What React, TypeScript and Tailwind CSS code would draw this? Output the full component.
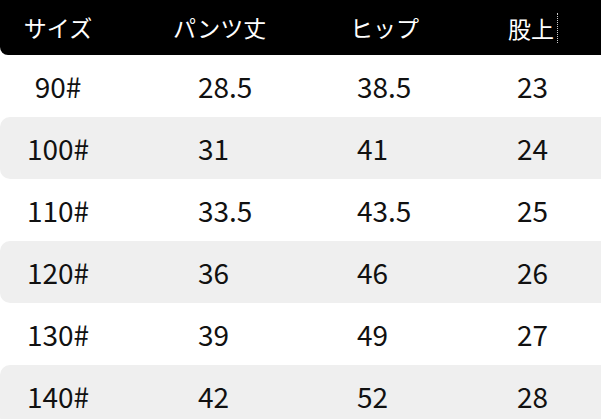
import React from 'react';

const rows = [
  { size: '90#', length: '28.5', hip: '38.5', rise: '23' },
  { size: '100#', length: '31', hip: '41', rise: '24' },
  { size: '110#', length: '33.5', hip: '43.5', rise: '25' },
  { size: '120#', length: '36', hip: '46', rise: '26' },
  { size: '130#', length: '39', hip: '49', rise: '27' },
  { size: '140#', length: '42', hip: '52', rise: '28' },
];

export default function App() {
  return (
    <div
      className="w-[601px] h-[419px] overflow-hidden bg-white text-[#111]"
      style={{ fontFamily: '"Noto Sans CJK JP", "Noto Sans", sans-serif' }}
    >
      {/* header */}
      <div className="flex items-center h-[55px] bg-black text-white text-[23px] rounded-bl-[8px]">
        <div className="w-[116px] text-center">サイズ</div>
        <div className="w-[234px] pl-[57px]">パンツ丈</div>
        <div className="w-[158px]">ヒップ</div>
        <div className="flex items-center">
          <span className="border-r border-dotted border-white/80 pr-[3px] leading-[30px]">股上</span>
        </div>
      </div>

      {rows.map((r, i) => (
        <div
          key={r.size}
          className={
            'flex items-center h-[62px] text-[28px] ' +
            (i % 2 === 1 ? 'bg-[#efefef] rounded-l-[10px]' : 'bg-white')
          }
        >
          <div className="w-[116px] text-center">{r.size}</div>
          <div className="w-[159px] ml-[82px]">{r.length}</div>
          <div className="w-[160px]">{r.hip}</div>
          <div className="flex-1">{r.rise}</div>
        </div>
      ))}
    </div>
  );
}
